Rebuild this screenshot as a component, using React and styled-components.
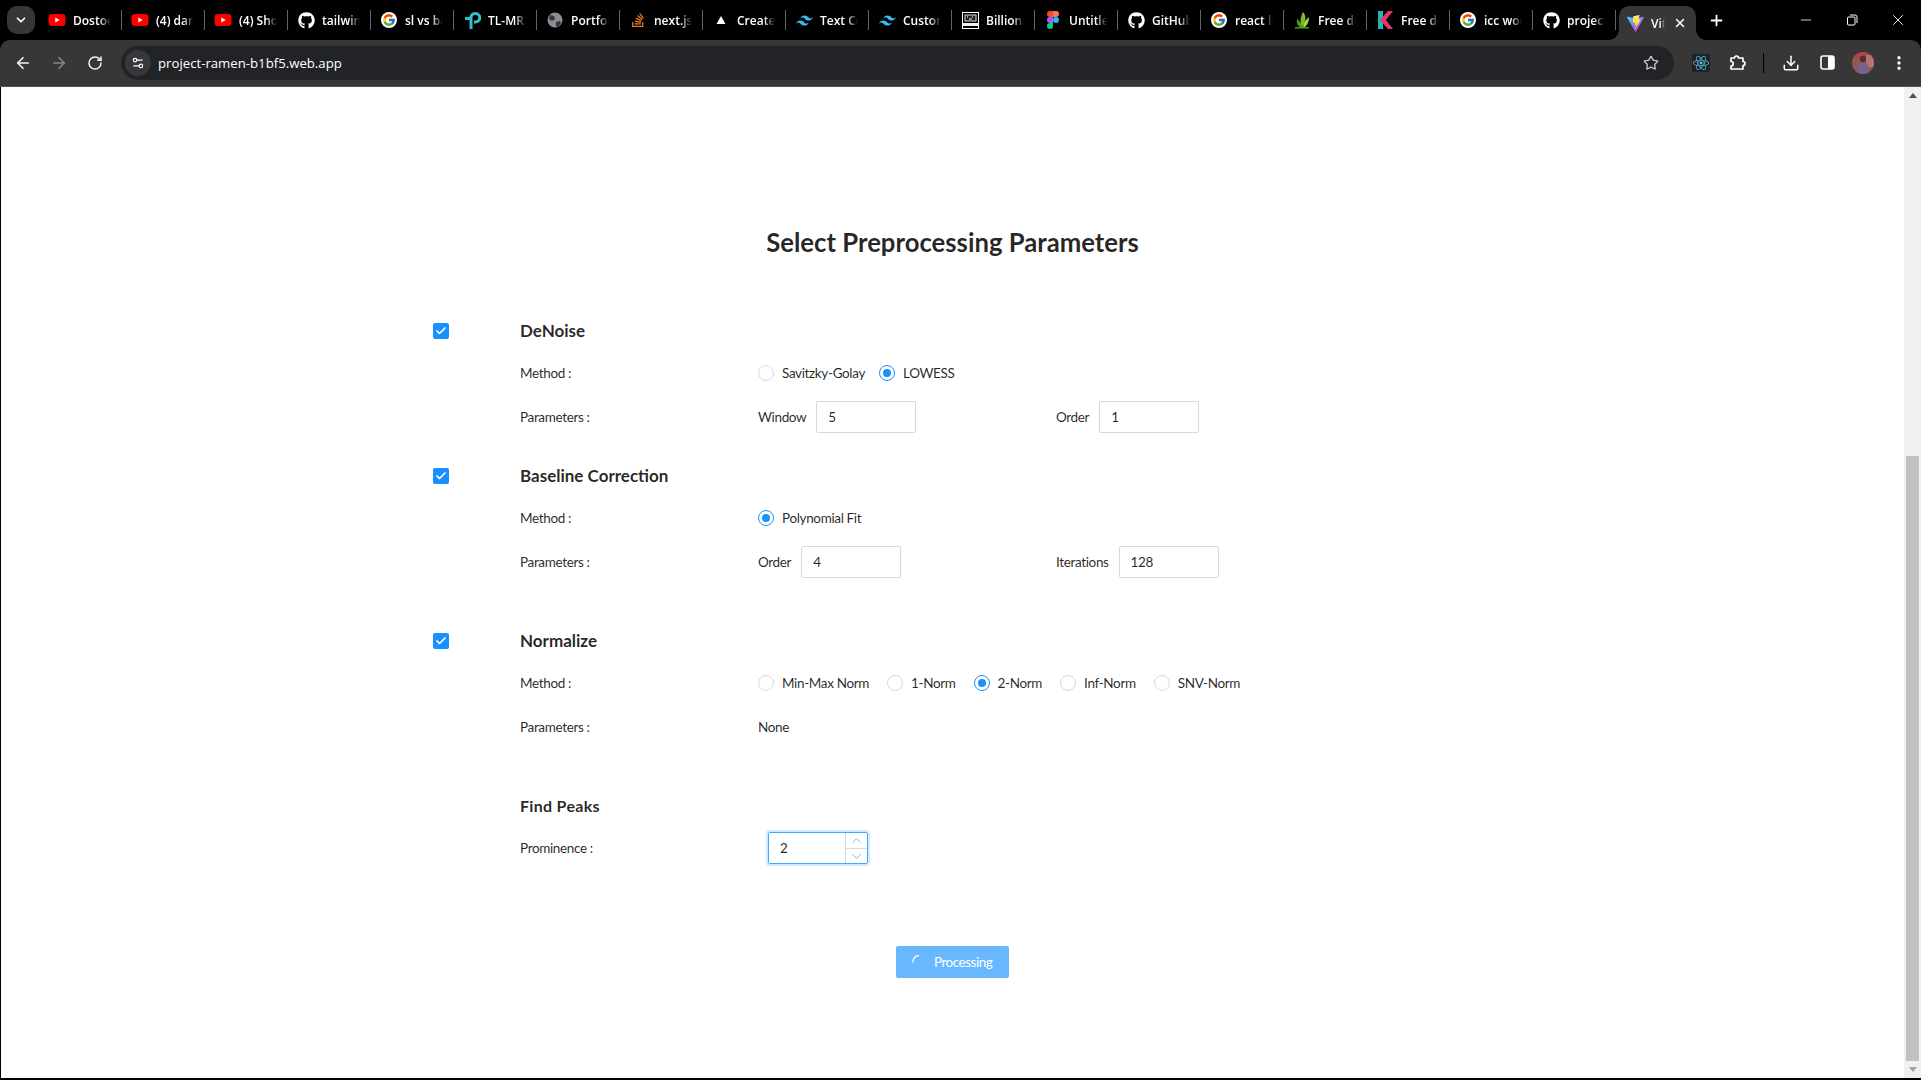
import React from "react";
import styled, { createGlobalStyle } from "styled-components";
import {
  ArrowLeft,
  ArrowRight,
  RotateCw,
  Star,
  Download,
  EllipsisVertical,
  Minus,
  X,
  Plus,
  ChevronDown,
  ChevronUp,
  Settings2,
  Check,
} from "lucide-react";
import { FaGithub, FaYoutube, FaReact, FaStackOverflow } from "react-icons/fa";
import { FcGoogle } from "react-icons/fc";
import { SiTailwindcss } from "react-icons/si";

const GlobalStyle = createGlobalStyle`
  html, body {
    margin: 0;
    padding: 0;
    background: #fff;
    overflow: hidden;
  }
  * {
    box-sizing: border-box;
  }
`;

// favicons that the icon packages dont have
const YoutubeIcon = () => (
  <YoutubeBadge>
    <FaYoutube size={18} color="#ff0000" />
  </YoutubeBadge>
);
const GithubIcon = () => <FaGithub size={17} color="#fff" />;
const GoogleIcon = () => (
  <GoogleBadge>
    <FcGoogle size={14} />
  </GoogleBadge>
);
const TailwindIcon = () => <SiTailwindcss size={17} color="#38bdf8" />;

const TpLinkIcon = () => (
  <svg width="17" height="17" viewBox="0 0 17 17" fill="none" stroke="#2fc1cf" strokeWidth="3">
    <path d="M7 17V5.500a4 4 0 0 1 4-4h.5a4 4 0 0 1 0 8.500H10" />
    <path d="M6 6.500H1" />
  </svg>
);

const GlobeIcon = () => (
  <svg width="16" height="16" viewBox="0 0 16 16">
    <circle cx="8" cy="8" r="7.5" fill="#8a8d91" />
    <path d="M3 3l4 1 1 3-3 2-3-2zM9 10l4-1 1 2-3 4-2-1z" fill="#33363a" />
  </svg>
);

const StackIcon = () => <FaStackOverflow size={16} color="#e8791f" />;

const TriangleIcon = () => (
  <svg width="16" height="16" viewBox="0 0 16 16">
    <path d="M8 4l4.500 8h-9z" fill="#fff" />
  </svg>
);

const BillionsIcon = () => (
  <svg width="17" height="17" viewBox="0 0 17 17">
    <rect x="0.5" y="0.5" width="16" height="16" fill="#000" stroke="#fff" />
    <rect x="3" y="3" width="11" height="6" fill="#222" stroke="#ddd" />
    <path d="M1 11h15v3H1z" fill="#eee" />
    <path d="M5 5h1M10 5h1M7 7h3" stroke="#fff" />
  </svg>
);

const FigmaIcon = () => (
  <svg width="12" height="18" viewBox="0 0 12 18">
    <path d="M3 0h3v6H3a3 3 0 0 1 0-6z" fill="#f24e1e" />
    <path d="M6 0h3a3 3 0 0 1 0 6H6z" fill="#ff7262" />
    <path d="M3 6h3v6H3a3 3 0 0 1 0-6z" fill="#a259ff" />
    <circle cx="9" cy="9" r="3" fill="#1abcfe" />
    <path d="M3 12h3v3a3 3 0 1 1-3-3z" fill="#0acf83" />
  </svg>
);

const LeafIcon = () => (
  <svg width="17" height="17" viewBox="0 0 17 17">
    <path d="M9 0c3 3 3 8 1 12L8 16C6 11 6 5 9 0z" fill="#7dbb2e" />
    <path d="M15 5c0 5-2 9-6 11 0-4 2-8 6-11z" fill="#a5d64c" />
    <path d="M3 7c3 2 5 5 5 9-4-1-6-5-5-9z" fill="#4e9a1f" />
    <path d="M1 15h14v1.500H1z" fill="#4e9a1f" />
  </svg>
);

const KiteIcon = () => (
  <svg width="16" height="18" viewBox="0 0 16 18">
    <path d="M1 0h5v18H1z" fill="#1fb6b0" />
    <path d="M3 9l8-9h5L9 9l7 9h-5z" fill="#e8356d" />
  </svg>
);

const ViteIcon = () => (
  <svg width="17" height="17" viewBox="0 0 256 257">
    <defs>
      <linearGradient id="viteA" x1="0" y1="0.1" x2="0.6" y2="1">
        <stop offset="0" stopColor="#41d1ff" />
        <stop offset="1" stopColor="#bd34fe" />
      </linearGradient>
      <linearGradient id="viteB" x1="0.4" y1="0" x2="0.5" y2="1">
        <stop offset="0" stopColor="#ffea83" />
        <stop offset="0.5" stopColor="#ffdd35" />
        <stop offset="1" stopColor="#ffa800" />
      </linearGradient>
    </defs>
    <path
      fill="url(#viteA)"
      d="M255.153 37.938L134.897 252.976c-2.483 4.44-8.862 4.466-11.382.048L.875 37.958c-2.746-4.814 1.371-10.646 6.827-9.67l120.385 21.517a6.537 6.537 0 0 0 2.322-.004l117.867-21.483c5.438-.991 9.574 4.796 6.877 9.62Z"
    />
    <path
      fill="url(#viteB)"
      d="M185.432.063L96.44 17.501a3.268 3.268 0 0 0-2.634 3.014l-5.474 92.456a3.268 3.268 0 0 0 3.997 3.378l24.777-5.718c2.318-.535 4.413 1.507 3.936 3.838l-7.361 36.047c-.495 2.426 1.782 4.5 4.151 3.78l15.304-4.649c2.372-.72 4.652 1.36 4.15 3.788l-11.698 56.621c-.732 3.542 3.979 5.473 5.943 2.437l1.313-2.028l72.516-144.72c1.215-2.423-.88-5.186-3.54-4.672l-25.505 4.922c-2.396.462-4.435-1.77-3.759-4.114l16.646-57.705c.677-2.35-1.37-4.583-3.769-4.113Z"
    />
  </svg>
);

const tabs = [
  { title: "Dostoevsky", icon: <YoutubeIcon /> },
  { title: "(4) dark", icon: <YoutubeIcon /> },
  { title: "(4) Shorts", icon: <YoutubeIcon /> },
  { title: "tailwind", icon: <GithubIcon /> },
  { title: "sl vs base", icon: <GoogleIcon /> },
  { title: "TL-MR3", icon: <TpLinkIcon /> },
  { title: "Portfolio", icon: <GlobeIcon /> },
  { title: "next.js", icon: <StackIcon /> },
  { title: "Create", icon: <TriangleIcon /> },
  { title: "Text Color", icon: <TailwindIcon /> },
  { title: "Custom", icon: <TailwindIcon /> },
  { title: "Billions", icon: <BillionsIcon /> },
  { title: "Untitled", icon: <FigmaIcon /> },
  { title: "GitHub", icon: <GithubIcon /> },
  { title: "react loader", icon: <GoogleIcon /> },
  { title: "Free download", icon: <LeafIcon /> },
  { title: "Free download", icon: <KiteIcon /> },
  { title: "icc world", icon: <GoogleIcon /> },
  { title: "project", icon: <GithubIcon /> },
];

const App = () => {
  return (
    <Window>
      <GlobalStyle />
      <TabStrip>
        <TabSearch>
          <ChevronDown size={14} strokeWidth={3} color="#fff" />
        </TabSearch>
        {tabs.map((tab, i) => (
          <Tab key={i}>
            <TabIcon>{tab.icon}</TabIcon>
            <TabTitle>{tab.title}</TabTitle>
          </Tab>
        ))}
        <ActiveTab>
          <TabIcon>
            <ViteIcon />
          </TabIcon>
          <ActiveTitle>Vite</ActiveTitle>
          <X size={14} strokeWidth={2.5} color="#fff" />
        </ActiveTab>
        <NewTab>
          <Plus size={17} strokeWidth={2.5} color="#fff" />
        </NewTab>
        <WindowControls>
          <WindowButton>
            <Minus size={16} strokeWidth={1.2} color="#fff" />
          </WindowButton>
          <WindowButton>
            <svg width="12" height="12" viewBox="0 0 12 12" fill="none" stroke="#fff">
              <rect x="1.5" y="3" width="7.5" height="8" rx="1" />
              <path d="M4 1h5a2 2 0 0 1 2 2v6" />
            </svg>
          </WindowButton>
          <WindowButton>
            <X size={18} strokeWidth={1.2} color="#fff" />
          </WindowButton>
        </WindowControls>
      </TabStrip>

      <Toolbar>
        <NavButton>
          <ArrowLeft size={18} strokeWidth={2.2} color="#f1f3f4" />
        </NavButton>
        <NavButton>
          <ArrowRight size={18} strokeWidth={2.2} color="#85888b" />
        </NavButton>
        <NavButton>
          <RotateCw size={16} strokeWidth={2.2} color="#f1f3f4" />
        </NavButton>
        <AddressBar>
          <SiteInfo>
            <Settings2 size={14} color="#fff" />
          </SiteInfo>
          <Url>project-ramen-b1bf5.web.app</Url>
          <Star size={16} strokeWidth={2} color="#c4c7c5" />
        </AddressBar>
        <ToolIcons>
          <ReactBadge>
            <FaReact size={18} color="#58c4dc" />
          </ReactBadge>
          <ToolIcon>
            <svg width="17" height="17" viewBox="0 0 17 17" fill="none" stroke="#fff" strokeWidth="1.7">
              <path d="M2 4h3.500a2 2 0 0 1 4 0H14v3.500a2 2 0 0 1 0 4V15H2v-3a2 2 0 0 0 0-4.500z" strokeLinejoin="round" />
            </svg>
          </ToolIcon>
          <ToolDivider />
          <ToolIcon>
            <Download size={18} strokeWidth={2} color="#fff" />
          </ToolIcon>
          <ToolIcon>
            <svg width="15" height="15" viewBox="0 0 15 15">
              <rect x="1" y="1" width="13" height="13" rx="2" fill="none" stroke="#fff" strokeWidth="1.6" />
              <rect x="8" y="1" width="6" height="13" rx="1" fill="#fff" />
            </svg>
          </ToolIcon>
          <ToolIcon>
            <Avatar>
              <svg width="22" height="22" viewBox="0 0 22 22">
                <rect width="22" height="22" fill="#8e5a52" />
                <rect width="22" height="8" fill="#a9474a" />
                <rect x="14" y="3" width="8" height="12" fill="#b5736a" />
                <circle cx="11" cy="7" r="3.2" fill="#4d3230" />
                <path d="M5 22l1.500-11h9L17 22z" fill="#77618c" />
              </svg>
            </Avatar>
          </ToolIcon>
          <ToolIcon>
            <EllipsisVertical size={18} strokeWidth={2.4} color="#fff" />
          </ToolIcon>
        </ToolIcons>
      </Toolbar>

      <Viewport>
        <Page>
          <Title>Select Preprocessing Parameters</Title>

          <Section $gap={32}>
            <CheckCell>
              <CheckBox>
                <Check size={12} strokeWidth={3.5} color="#fff" />
              </CheckBox>
            </CheckCell>
            <Body>
              <Heading>DeNoise</Heading>
              <MethodRow>
                <RowLabel>Method :</RowLabel>
                <RadioGroup $gap={14}>
                  <RadioOption label="Savitzky-Golay" />
                  <RadioOption label="LOWESS" checked />
                </RadioGroup>
              </MethodRow>
              <ParamsRow>
                <RowLabel>Parameters :</RowLabel>
                <Field label="Window" value="5" />
                <Field label="Order" value="1" />
              </ParamsRow>
            </Body>
          </Section>

          <Section $gap={52}>
            <CheckCell>
              <CheckBox>
                <Check size={12} strokeWidth={3.5} color="#fff" />
              </CheckBox>
            </CheckCell>
            <Body>
              <Heading>Baseline Correction</Heading>
              <MethodRow>
                <RowLabel>Method :</RowLabel>
                <RadioGroup $gap={14}>
                  <RadioOption label="Polynomial Fit" checked />
                </RadioGroup>
              </MethodRow>
              <ParamsRow>
                <RowLabel>Parameters :</RowLabel>
                <Field label="Order" value="4" />
                <Field label="Iterations" value="128" />
              </ParamsRow>
            </Body>
          </Section>

          <Section $gap={52}>
            <CheckCell>
              <CheckBox>
                <Check size={12} strokeWidth={3.5} color="#fff" />
              </CheckBox>
            </CheckCell>
            <Body>
              <Heading>Normalize</Heading>
              <MethodRow>
                <RowLabel>Method :</RowLabel>
                <RadioGroup $gap={18}>
                  <RadioOption label="Min-Max Norm" />
                  <RadioOption label="1-Norm" />
                  <RadioOption label="2-Norm" checked />
                  <RadioOption label="Inf-Norm" />
                  <RadioOption label="SNV-Norm" />
                </RadioGroup>
              </MethodRow>
              <ParamsRow>
                <RowLabel>Parameters :</RowLabel>
                <PlainValue>None</PlainValue>
              </ParamsRow>
            </Body>
          </Section>

          <Section $gap={82}>
            <CheckCell />
            <Body>
              <PeaksHeading>Find Peaks</PeaksHeading>
              <ProminenceRow>
                <RowLabel>Prominence :</RowLabel>
                <NumberBox>
                  <NumberInput defaultValue="2" readOnly />
                  <Stepper>
                    <StepButton>
                      <ChevronUp size={15} strokeWidth={1.3} color="#999" />
                    </StepButton>
                    <StepButton>
                      <ChevronDown size={15} strokeWidth={1.3} color="#999" />
                    </StepButton>
                  </Stepper>
                </NumberBox>
              </ProminenceRow>
            </Body>
          </Section>

          <SubmitRow>
            <LoadingButton type="button">
              <Spinner width="14" height="14" viewBox="0 0 14 14" fill="none" stroke="#fff" strokeWidth="1.3">
                <path d="M.7 7.500A6.500 6.500 0 0 1 7 .7" />
              </Spinner>
              Processing
            </LoadingButton>
          </SubmitRow>
        </Page>
        <ScrollBar>
          <ScrollArrow>
            <svg width="8" height="5" viewBox="0 0 8 5">
              <path d="M4 0l4 5H0z" fill="#505050" />
            </svg>
          </ScrollArrow>
          <ScrollTrack>
            <ScrollThumb />
          </ScrollTrack>
          <ScrollArrow>
            <svg width="8" height="5" viewBox="0 0 8 5">
              <path d="M0 0h8L4 5z" fill="#a3a3a3" />
            </svg>
          </ScrollArrow>
        </ScrollBar>
      </Viewport>
      <BottomEdge />
    </Window>
  );
};

const RadioOption = ({ label, checked }) => (
  <RadioItem>
    <RadioDot $checked={checked} />
    {label}
  </RadioItem>
);

const Field = ({ label, value }) => (
  <FieldBox>
    {label}
    <TextInput defaultValue={value} readOnly />
  </FieldBox>
);

const Window = styled.div`
  display: flex;
  flex-direction: column;
  width: 1921px;
  height: 1080px;
  background: #000;
  overflow: hidden;
`;

const TabStrip = styled.div`
  display: flex;
  align-items: flex-end;
  height: 40px;
  padding-left: 7px;
  background: #000;
`;

const TabSearch = styled.div`
  display: flex;
  align-items: center;
  justify-content: center;
  width: 28px;
  height: 28px;
  margin: 0 4px 6px 0;
  border-radius: 10px;
  background: #373737;
`;

const Tab = styled.div`
  display: flex;
  align-items: center;
  width: 83px;
  height: 20px;
  margin-bottom: 10px;
  padding-left: 9px;
  border-right: 1px solid #5f6368;

  &:nth-last-of-type(3) {
    border-right: none;
  }
`;

const TabIcon = styled.span`
  display: flex;
  align-items: center;
  justify-content: center;
  flex: none;
  width: 18px;
  height: 18px;
  margin-right: 7px;
`;

const YoutubeBadge = styled.span`
  display: flex;
  background: linear-gradient(#fff, #fff) center / 7px 7px no-repeat;
`;

const GoogleBadge = styled.span`
  display: flex;
  align-items: center;
  justify-content: center;
  width: 16px;
  height: 16px;
  border-radius: 50%;
  background: #fff;
`;

const TabTitle = styled.span`
  width: 38px;
  overflow: hidden;
  white-space: nowrap;
  font-family: "Open Sans", sans-serif;
  font-size: 12px;
  font-weight: 600;
  color: #fff;
  -webkit-mask-image: linear-gradient(to right, #000 70%, transparent);
  mask-image: linear-gradient(to right, #000 70%, transparent);
`;

const ActiveTab = styled.div`
  position: relative;
  display: flex;
  align-items: center;
  width: 77px;
  height: 34px;
  margin-left: 3px;
  padding: 0 9px 0 7px;
  border-radius: 10px 10px 0 0;
  background: #373737;

  &::before,
  &::after {
    content: "";
    position: absolute;
    bottom: 0;
    width: 10px;
    height: 10px;
    background: radial-gradient(circle at var(--c), #000 9.5px, #373737 10px);
  }
  &::before {
    --c: 0 0;
    left: -10px;
  }
  &::after {
    --c: 100% 0;
    right: -10px;
  }
`;

const ActiveTitle = styled(TabTitle)`
  flex: none;
  width: 14px;
  margin-right: auto;
  -webkit-mask-image: linear-gradient(to right, #000 65%, transparent);
  mask-image: linear-gradient(to right, #000 65%, transparent);
`;

const NewTab = styled.div`
  display: flex;
  align-items: center;
  justify-content: center;
  width: 28px;
  height: 28px;
  margin: 0 0 6px 6px;
`;

const WindowControls = styled.div`
  display: flex;
  align-self: flex-start;
  margin-left: auto;
`;

const WindowButton = styled.div`
  display: flex;
  align-items: center;
  justify-content: center;
  width: 46px;
  height: 40px;
`;

const Toolbar = styled.div`
  display: flex;
  align-items: center;
  height: 47px;
  padding: 0 0 1px 5px;
  border-radius: 10px 10px 0 0;
  background: #373737;
  border-bottom: 1px solid #555;
`;

const NavButton = styled.div`
  display: flex;
  align-items: center;
  justify-content: center;
  width: 36px;
  height: 34px;
`;

const AddressBar = styled.div`
  display: flex;
  align-items: center;
  width: 1553px;
  height: 34px;
  margin-left: 8px;
  padding: 0 15px 0 4px;
  border-radius: 17px;
  background: #222326;
`;

const SiteInfo = styled.div`
  display: flex;
  align-items: center;
  justify-content: center;
  width: 26px;
  height: 26px;
  border-radius: 50%;
  background: #37383b;
`;

const Url = styled.span`
  flex: 1;
  margin-left: 7px;
  font-family: "Open Sans", sans-serif;
  font-size: 13.2px;
  color: #fff;
`;

const ToolIcons = styled.div`
  display: flex;
  align-items: center;
  margin-left: 8px;
`;

const ToolIcon = styled.div`
  display: flex;
  align-items: center;
  justify-content: center;
  width: 36px;
  height: 34px;
`;

const ReactBadge = styled(ToolIcon)`
  width: 37px;

  svg {
    padding: 1px;
    background: #20232a;
  }
`;

const ToolDivider = styled.div`
  width: 1px;
  height: 20px;
  margin: 0 9px 0 8px;
  background: #000;
`;

const Avatar = styled.div`
  width: 22px;
  height: 22px;
  overflow: hidden;
  border-radius: 50%;
`;

const Viewport = styled.div`
  display: flex;
  flex: 1;
  min-height: 0;
  margin-left: 1px;
  background: #fff;
`;

const Page = styled.main`
  flex: 1;
  padding-top: 140px;
  background: #fff;
  font-family: "Lato", "Liberation Sans", sans-serif;
  font-size: 13.5px;
  letter-spacing: -0.35px;
  color: rgba(0, 0, 0, 0.85);
`;

const Title = styled.h1`
  margin: 0 0 63px;
  height: 30px;
  line-height: 30px;
  text-align: center;
  font-size: 25.7px;
  font-weight: 700;
  letter-spacing: 0;
`;

const Section = styled.section`
  display: flex;
  margin-bottom: ${(props) => props.$gap}px;
  padding-left: 432px;
`;

const CheckCell = styled.div`
  width: 87px;
  padding-top: 3px;
`;

const CheckBox = styled.span`
  display: flex;
  align-items: center;
  justify-content: center;
  width: 16px;
  height: 16px;
  border-radius: 2px;
  background: #1890ff;
`;

const Body = styled.div`
  display: flex;
  flex-direction: column;
`;

const Heading = styled.h2`
  margin: 0 0 20px;
  height: 22px;
  line-height: 22px;
  font-size: 17px;
  font-weight: 700;
  letter-spacing: 0;
`;

const PeaksHeading = styled(Heading)`
  font-size: 16px;
  letter-spacing: 0.3px;
`;

const MethodRow = styled.div`
  display: flex;
  align-items: center;
  height: 22px;
  margin-bottom: 17px;
`;

const ParamsRow = styled.div`
  display: flex;
  align-items: center;
  height: 32px;
`;

const ProminenceRow = styled(ParamsRow)`
  margin-top: -5px;
`;

const RowLabel = styled.span`
  width: 238px;
  flex: none;
`;

const RadioGroup = styled.div`
  display: flex;
  gap: ${(props) => props.$gap}px;
`;

const RadioItem = styled.label`
  display: flex;
  align-items: center;
  gap: 8px;
  white-space: nowrap;
`;

const RadioDot = styled.span`
  display: flex;
  align-items: center;
  justify-content: center;
  width: 16px;
  height: 16px;
  border: 1px solid ${(props) => (props.$checked ? "#1890ff" : "#d9d9d9")};
  border-radius: 50%;

  &::after {
    content: "";
    display: ${(props) => (props.$checked ? "block" : "none")};
    width: 8px;
    height: 8px;
    border-radius: 50%;
    background: #1890ff;
  }
`;

const FieldBox = styled.label`
  display: flex;
  align-items: center;
  gap: 10px;
  width: 298px;
`;

const TextInput = styled.input`
  width: 100px;
  height: 32px;
  padding: 4px 11px;
  border: 1px solid #d9d9d9;
  border-radius: 2px;
  outline: none;
  font: inherit;
  letter-spacing: inherit;
  color: inherit;
`;

const PlainValue = styled.span``;

const NumberBox = styled.div`
  display: flex;
  width: 100px;
  height: 32px;
  margin-left: 10px;
  border: 1px solid #40a9ff;
  border-radius: 2px;
  box-shadow: 0 0 0 2px rgba(24, 144, 255, 0.2);
`;

const NumberInput = styled.input`
  flex: 1;
  min-width: 0;
  padding: 0 11px;
  border: none;
  outline: none;
  font: inherit;
  color: inherit;
`;

const Stepper = styled.div`
  display: flex;
  flex-direction: column;
  width: 22px;
  border-left: 1px solid #d9d9d9;
`;

const StepButton = styled.div`
  display: flex;
  flex: 1;
  align-items: center;
  justify-content: center;

  & + & {
    border-top: 1px solid #d9d9d9;
  }
`;

const SubmitRow = styled.div`
  display: flex;
  justify-content: center;
`;

const LoadingButton = styled.button`
  display: flex;
  align-items: center;
  gap: 8px;
  width: 113px;
  height: 32px;
  padding: 0 15px;
  border: 1px solid #69b7ff;
  border-radius: 2px;
  background: #69b7ff;
  font: inherit;
  letter-spacing: -0.5px;
  color: #fff;
`;

const Spinner = styled.svg`
  flex: none;
`;

const ScrollBar = styled.div`
  display: flex;
  flex-direction: column;
  flex: none;
  width: 17px;
  background: #f1f1f1;
`;

const ScrollArrow = styled.div`
  display: flex;
  flex: none;
  align-items: center;
  justify-content: center;
  height: 17px;
`;

const ScrollTrack = styled.div`
  display: flex;
  flex: 1;
  flex-direction: column;
  justify-content: flex-end;
  padding: 0 2px;
`;

const ScrollThumb = styled.div`
  height: 605px;
  background: #c1c1c1;
`;

const BottomEdge = styled.div`
  flex: none;
  height: 2px;
  background: #000;
`;

export default App;
